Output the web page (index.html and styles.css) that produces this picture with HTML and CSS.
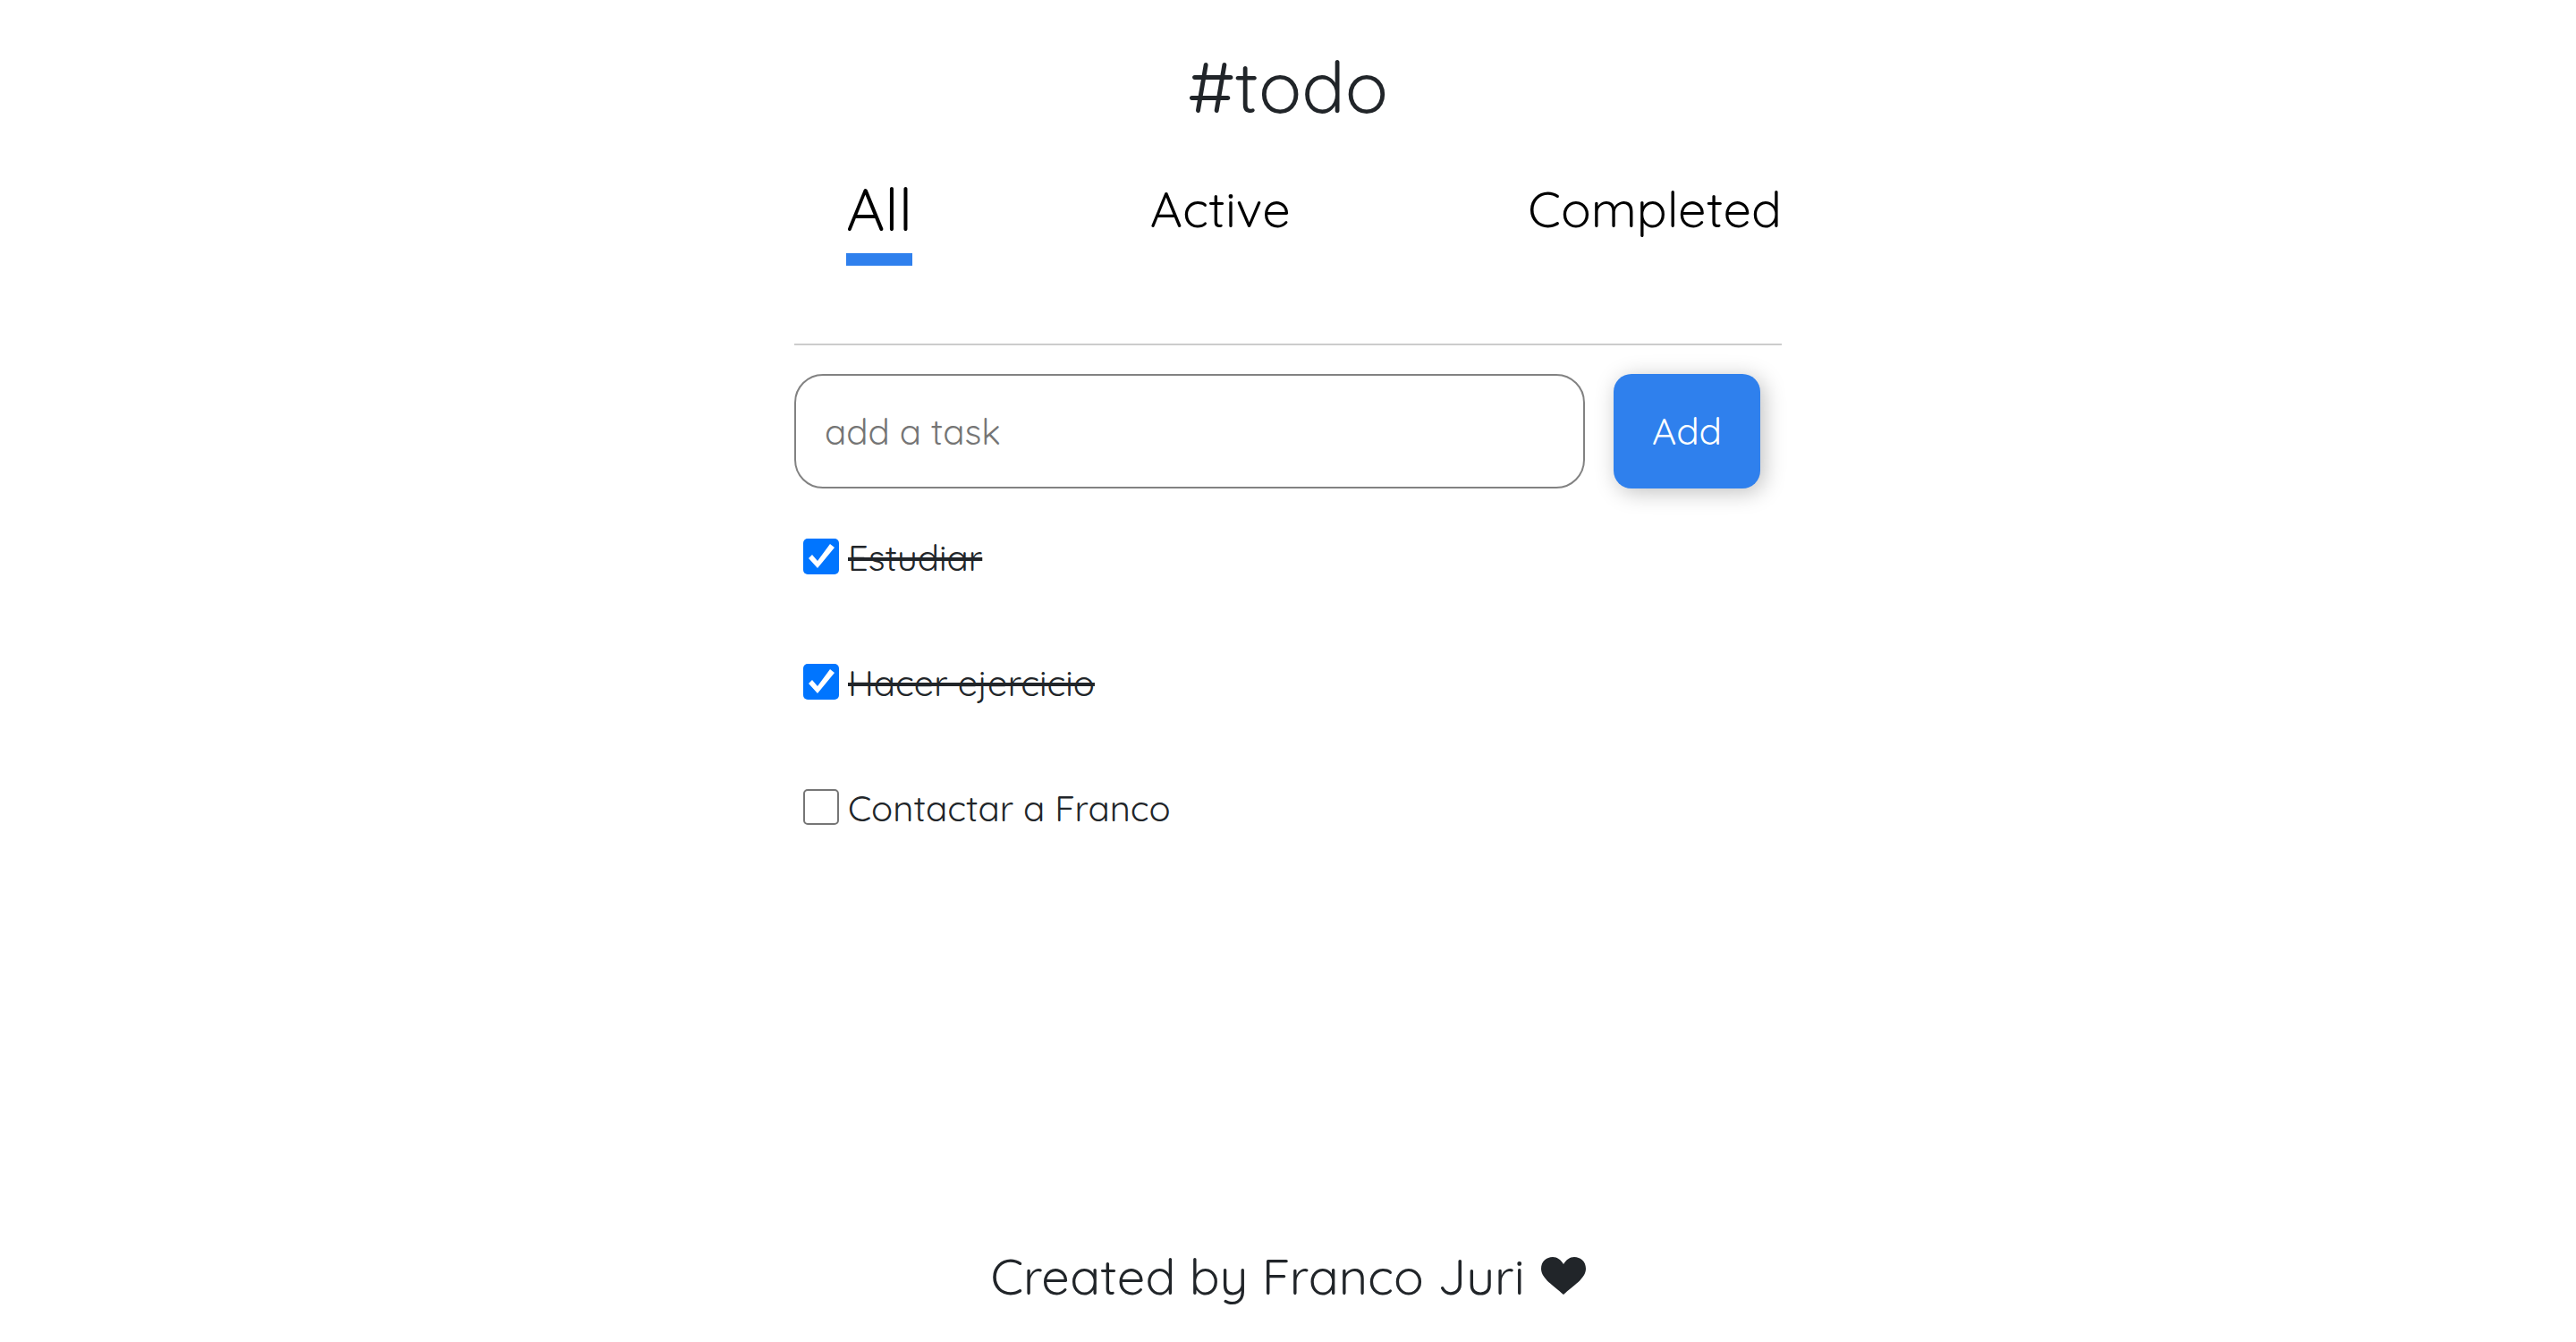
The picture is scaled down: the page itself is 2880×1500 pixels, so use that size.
FILE: index.html
```html
<!DOCTYPE html>
<html lang="en">
<head>
<meta charset="utf-8">
<meta name="viewport" content="width=device-width, initial-scale=1">
<title>#todo</title>
<link rel="stylesheet" href="styles.css">
</head>
<body>
<main class="app">
  <h1 class="title">#todo</h1>
  <nav class="tabs">
    <a class="tab tab-active" href="#all">All</a>
    <a class="tab" href="#active">Active</a>
    <a class="tab" href="#completed">Completed</a>
  </nav>
  <form class="add-form">
    <input class="task-input" type="text" placeholder="add a task" aria-label="add a task">
    <button class="add-button" type="button">Add</button>
  </form>
  <ul class="tasks">
    <li class="task"><input class="check" type="checkbox" id="task-1" checked><label class="task-label" for="task-1">Estudiar</label></li>
    <li class="task"><input class="check" type="checkbox" id="task-2" checked><label class="task-label" for="task-2">Hacer ejercicio</label></li>
    <li class="task"><input class="check" type="checkbox" id="task-3"><label class="task-label" for="task-3">Contactar a Franco</label></li>
  </ul>
</main>
<footer class="footer">
  <span>Created by Franco Juri</span>
  <svg class="heart" viewBox="0 0 50 42" aria-hidden="true"><path d="M25 8C28 3 32 0 37 0C44 0 50 5 50 13C50 24 36 32 25 42C14 32 0 24 0 13C0 5 6 0 13 0C18 0 22 3 25 8Z"/></svg>
</footer>
</body>
</html>
```
FILE: styles.css
```css
* { box-sizing: border-box; }

body {
  margin: 0;
  min-height: 100vh;
  display: flex;
  flex-direction: column;
  align-items: center;
  background: #fff;
  color: #212529;
  font-family: Quicksand, Lato, sans-serif;
  font-weight: 400;
  font-size: 40px;
  line-height: 60px;
}

.app {
  width: 100%;
  max-width: 1104px;
}

.title {
  margin: 0;
  padding-top: 46px;
  font-size: 80px;
  font-weight: 400;
  line-height: 100px;
  text-align: center;
}

.tabs {
  display: flex;
  justify-content: space-between;
  align-items: flex-start;
  height: 240px;
  padding: 45px 0 0 58px;
  border-bottom: 2px solid #ccc;
}

.tab {
  color: #000;
  font-size: 56px;
  line-height: 84px;
  text-decoration: none;
}

.tab-active {
  padding-bottom: 8px;
  border-bottom: 14px solid #2f80ed;
  font-size: 67px;
}

.add-form {
  display: flex;
  gap: 32px;
  padding: 32px 24px 0 0;
}

.task-input {
  flex: 1;
  min-width: 0;
  height: 128px;
  padding: 0 32px;
  border: 2px solid #828282;
  border-radius: 32px;
  background: #fff;
  color: inherit;
  font: inherit;
}

.task-input::placeholder { color: #757575; opacity: 1; }

.add-button {
  width: 164px;
  height: 128px;
  padding: 0;
  border: 0;
  border-radius: 20px;
  background: #2f80ed;
  color: #fff;
  font: inherit;
  font-size: 42px;
  box-shadow: 4px 4px 24px rgba(0, 0, 0, 0.25);
}

.tasks {
  display: flex;
  flex-direction: column;
  gap: 78px;
  margin: 0;
  padding: 45px 10px;
  list-style: none;
}

.task {
  display: flex;
  align-items: center;
  gap: 10px;
}

.task-label { padding-top: 2px; }

.check {
  appearance: none;
  width: 40px;
  height: 40px;
  margin: 0;
  border: 2px solid #767676;
  border-radius: 5px;
  background: #fff;
}

.check:checked {
  border: 0;
  background: #0075ff;
}

.check:checked::before {
  content: "";
  display: block;
  width: 40px;
  height: 40px;
  background: #fff;
  clip-path: polygon(6px 22px, 10px 18px, 16px 25px, 30px 6px, 35px 10px, 16px 33px);
}

.check:checked + .task-label {
  text-decoration: line-through;
  text-decoration-thickness: 4px;
}

.footer {
  display: flex;
  align-items: center;
  gap: 18px;
  margin-top: auto;
  padding-bottom: 32px;
  font-size: 56px;
  line-height: 84px;
}

.heart {
  width: 50px;
  height: 42px;
  fill: #212529;
}
```
